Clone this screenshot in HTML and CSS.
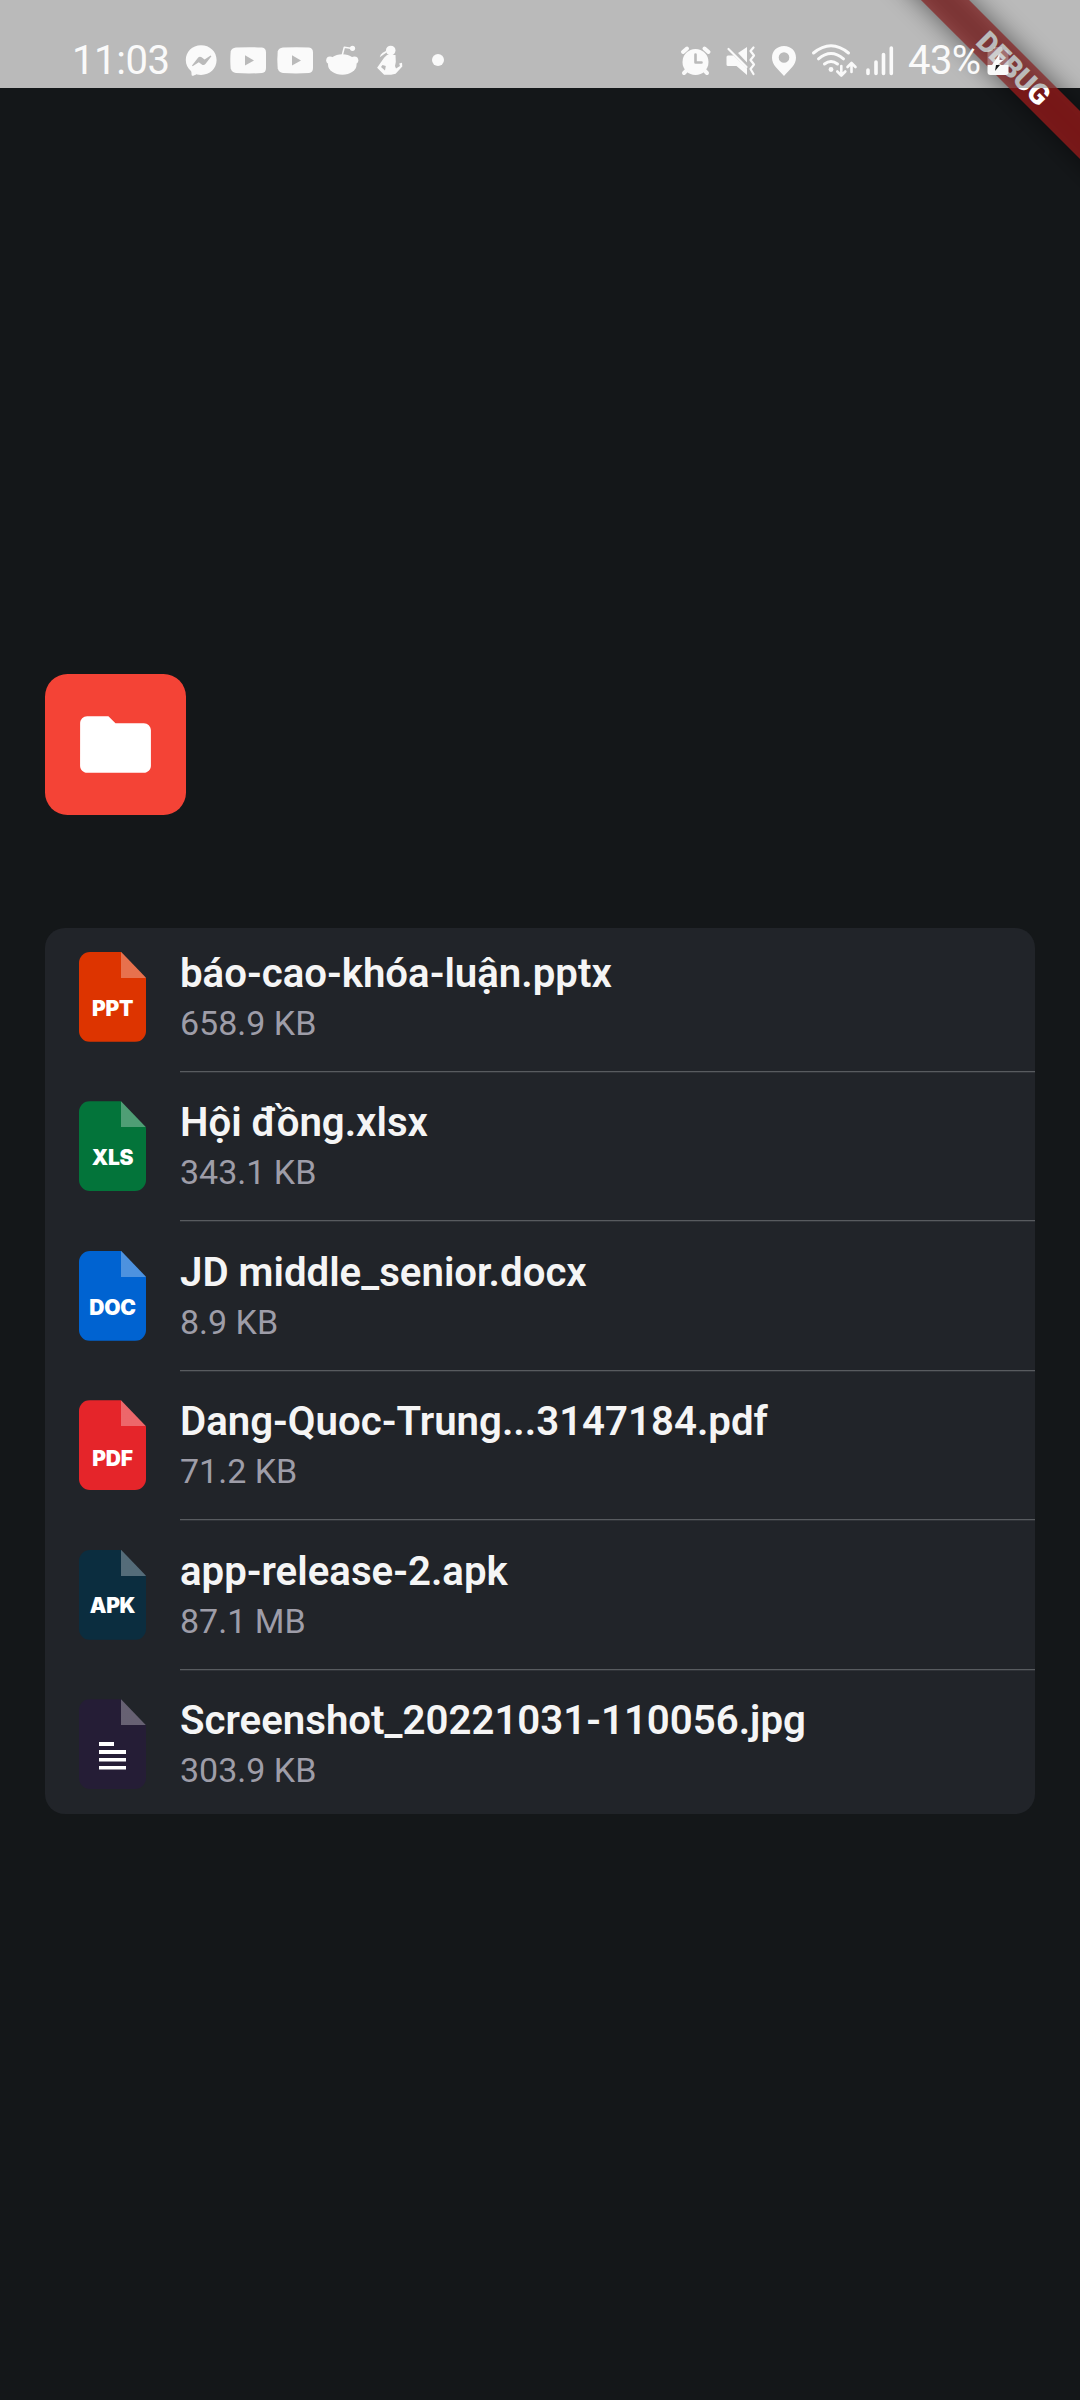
FILE: index.html
```html
<!DOCTYPE html>
<html lang="vi">
<head>
<meta charset="utf-8">
<title>Files</title>
<link rel="stylesheet" href="styles.css">
</head>
<body>
<div class="screen">
  <header class="status">
    <div class="group left">
      <span class="clock">11:03</span>
      <svg class="notifications" width="300" height="60" viewBox="180 30 300 60">
        <path d="M201 45.300c-8.800 0-15.200 6.400-15.200 14.700 0 4.400 1.800 8.100 4.900 10.700.5.400.7 1 .7 1.600l.2 2.500c0 .8.900 1.200 1.600.9l3-1.300c.3-.1.600-.1.900 0 1.300.3 2.500.5 3.900.5 8.800 0 15.600-6.400 15.600-14.900S209.800 45.300 201 45.300z"/>
        <path class="hole" d="M192 65.500l6-7.700c1-1.200 2.400-1.400 3.600-.5l3 2.200 6-4 .8.800-6 7.600c-1 1.200-2.400 1.400-3.600.5l-3-2.200-6.200 4z"/>
        <path d="M236 47.600q14-.8 26 0 4 .4 4 5v15.500q0 4.500-4 5-13 .7-26 0-4-.4-5.300-4.500-.8-8.500 0-17 .8-3.600 5.300-4z"/>
        <path class="hole" d="M245 55.200v10.300l9-5.100z"/>
        <path d="M283 47.600q14-.8 26 0 4 .4 4 5v15.500q0 4.500-4 5-13 .7-26 0-4-.4-5.300-4.500-.8-8.500 0-17 .8-3.600 5.300-4z"/>
        <path class="hole" d="M292 55.200v10.300l9-5.100z"/>
        <ellipse cx="342.300" cy="64.500" rx="14.300" ry="10.200"/>
        <circle cx="330" cy="60.300" r="3.800"/><circle cx="354.500" cy="60.300" r="3.800"/>
        <path class="line thin" d="M342.300 55l2-7.800 8 1.300"/><circle cx="352.500" cy="48.300" r="2.600"/>
        <circle cx="390.700" cy="50.500" r="4.800"/>
        <path d="M386.500 52.500l-6.800 4.800q.5-3 3-4.500l4-2.300z"/>
        <path fill-rule="evenodd" d="M387 55h8.500l.3 7-.8 4 1 2.500 4-2.500-.8-2.500 2.800-.7.300 3.700-6.700 7.300-4.500 1h-7l-7-7 7-10zM382.500 65l-1.500 2 4 3.500.8-4.500z"/>
        <circle cx="438" cy="60" r="6"/>
      </svg>
    </div>
    <div class="group right">
      <svg width="220" height="60" viewBox="676 30 220 60">
        <circle cx="695.500" cy="62" r="13"/>
        <path class="thick" d="M683 52l4-3.500M704.500 48.500l4 3.500M687 70l-3 3M704 70l3 3"/>
        <path class="holeline" d="M695.500 54.500v8h6"/>
        <path d="M728 55.500h5.500l13.500 13v6.500l-10.500-9H728q-1.500 0-1.500-1.500v-7.500q0-1.500 1.500-1.500zM738 53l9-6v15.500z"/>
        <path class="line" d="M728.500 49l18 18"/>
        <path class="line" d="M753.500 47.500l-3 3.500 3.500 4.500-3.500 4.500 3.500 4.500-3.500 4.500 3 5"/>
        <path fill-rule="evenodd" d="M784 46c-7 0-12 5-12 11.700C772 65 778 69 784 76c6-7 12-11 12-18.300C796 51 791 46 784 46zm0 6.200a5.300 5.300 0 1 1 0 10.600 5.300 5.300 0 0 1 0-10.600z"/>
        <path class="line w3" d="M813.500 53q17.500-14.500 35 0M818.500 58.800q12.500-10.500 25 0M824.500 64q6.500-5 13 0"/>
        <circle cx="831" cy="69.500" r="2.400"/>
        <path class="line w25" d="M841.300 66v9M837.300 71.500l4 4 4-4M851.500 72v-8.500M847.500 67l4-4 4 4"/>
        <path class="bars" d="M868 70v3.500M876 62v11.500M883.500 54.500v19M891.300 48v25.500"/>
      </svg>
      <span class="battery-text">43%</span>
      <svg class="battery" width="22" height="32" viewBox="0 0 22 32">
        <path fill-opacity=".3" d="M7 2h8v3h4q2.500 0 2.500 2.500V20H.5V7.500Q.5 5 3 5h4z"/>
        <path d="M.5 20h21v7q0 3-3 3h-15q-3 0-3-3z"/>
        <path d="M12.500 9L5 20h5.500l6-5h-4z"/>
        <path class="bolt" d="M9 20h4l-5 6z"/>
      </svg>
    </div>
  </header>
  <div class="banner-clip">
    <div class="banner-shadow"></div>
    <div class="banner">DEBUG</div>
  </div>
  <div class="status-scrim"></div>
  <main class="content">
    <div class="folder">
      <svg width="85" height="85" viewBox="0 0 24 24"><path d="M10 4H4c-1.100 0-1.990.9-1.990 2L2 18c0 1.100.9 2 2 2h16c1.100 0 2-.9 2-2V8c0-1.100-.9-2-2-2h-8l-2-2z"/></svg>
    </div>
    <section class="card">
      <article class="row">
        <div class="file ppt"><span>PPT</span></div>
        <div class="info"><div class="name">báo-cao-khóa-luận.pptx</div><div class="size">658.9 KB</div></div>
      </article>
      <article class="row">
        <div class="file xls"><span>XLS</span></div>
        <div class="info"><div class="name">Hội đồng.xlsx</div><div class="size">343.1 KB</div></div>
      </article>
      <article class="row">
        <div class="file doc"><span>DOC</span></div>
        <div class="info"><div class="name">JD middle_senior.docx</div><div class="size">8.9 KB</div></div>
      </article>
      <article class="row">
        <div class="file pdf"><span>PDF</span></div>
        <div class="info"><div class="name">Dang-Quoc-Trung...3147184.pdf</div><div class="size">71.2 KB</div></div>
      </article>
      <article class="row">
        <div class="file apk"><span>APK</span></div>
        <div class="info"><div class="name">app-release-2.apk</div><div class="size">87.1 MB</div></div>
      </article>
      <article class="row">
        <div class="file other"><svg width="27" height="28" viewBox="0 0 27 28"><path d="M0 0h15v4H0zM0 8h27v4H0zM0 16h27v3.500H0zM0 24h27v3.500H0z"/></svg></div>
        <div class="info"><div class="name">Screenshot_20221031-110056.jpg</div><div class="size">303.9 KB</div></div>
      </article>
    </section>
  </main>
</div>
</body>
</html>
```
FILE: styles.css
```css
* { box-sizing: border-box; }
body { margin: 0; font-family: Roboto, sans-serif; background: #141719; }
.screen { position: relative; width: 1080px; height: 2400px; overflow: hidden; background: #141719; }
svg { display: block; flex: none; }

.status { height: 88px; background: #fff; display: flex; justify-content: space-between; padding: 30px 71px 0 72px; color: #fafafa; }
.status-scrim { position: absolute; inset: 0 0 auto 0; height: 88px; background: rgba(0, 0, 0, .27); z-index: 2; }
.group { position: relative; display: flex; height: 58px; z-index: 3; }
.group svg { fill: #fafafa; }
.clock, .battery-text { font-size: 40px; line-height: 62px; white-space: nowrap; }
.clock { width: 108px; letter-spacing: -.4px; }
.battery-text { width: 79px; padding-left: 12px; letter-spacing: -.6px; }
.group .hole { fill: #bababa; }
.line, .thick, .holeline, .bars { fill: none; stroke: #fafafa; stroke-width: 2.2; stroke-linecap: round; stroke-linejoin: round; }
.thin { stroke-width: 1.5; }
.thick { stroke-width: 4; }
.holeline { stroke: #bababa; stroke-width: 2.600; }
.w3 { stroke-width: 3; }
.w25 { stroke-width: 2.600; }
.bars { stroke-width: 3.600; }
.battery { margin: 15px 0 0 12px; }
.group .bolt { fill: #141719; }

.banner-clip { position: absolute; inset: 0 0 auto auto; width: 280px; height: 260px; overflow: hidden; z-index: 1; }
.banner-shadow, .banner { position: absolute; left: 62px; top: 50px; width: 300px; height: 34px; transform: rotate(45deg); }
.banner-shadow { background: rgba(0, 0, 0, .5); filter: blur(13px); }
.banner { background: rgba(183, 28, 28, .627); color: #fff; font-size: 28.700px; line-height: 34px; font-weight: 900; text-align: center; padding-left: 4px; letter-spacing: -.3px; }

.content { padding: 586px 45px 0; }
.folder { width: 141px; height: 141px; border-radius: 22.500px; background: #f44336; display: flex; align-items: center; padding-left: 28px; fill: #fff; }
.card { margin-top: 113px; height: 886px; border-radius: 20px; background: #212429; padding-top: 23.800px; }
.row { height: 149.500px; display: flex; padding-left: 34px; }
.file { width: 67px; height: 90px; border-radius: 11px; clip-path: polygon(0 0, 42px 0, 67px 26px, 67px 100%, 0 100%); display: flex; justify-content: center; padding-top: 45px; color: #fff; font: 900 21px/23px Inter, sans-serif; letter-spacing: -.3px; background-image: linear-gradient(rgba(255,255,255,.3), rgba(255,255,255,.3)); background-repeat: no-repeat; background-size: 25px 26px; background-position: 42px 0; }
.file svg { fill: #fff; margin-top: -2px; }
.ppt { background-color: #dd3400; }
.xls { background-color: #03743a; }
.doc { background-color: #0063d1; }
.pdf { background-color: #e5252a; }
.pdf span { padding-top: 2px; }
.apk { background-color: #0b2d3f; }
.apk span { margin-top: -1px; }
.other { background-color: #251d36; }
.info { flex: 1; margin-left: 34px; border-bottom: 1px solid #585b5f; box-shadow: 0 1px #303338; height: 120px; }
.row:last-child .info { border: 0; box-shadow: none; }
.name { color: #f5f5f5; font-size: 40.200px; font-weight: 600; line-height: 46px; margin-top: -1px; white-space: nowrap; }
.size { color: #9e9da8; font-size: 34px; line-height: 40px; margin-top: 6px; }
```
